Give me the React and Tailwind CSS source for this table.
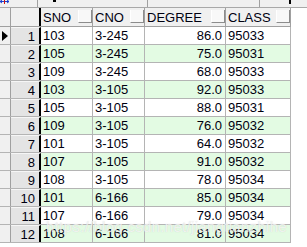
import React from "react";

const rows = [
  ["103", "3-245", "86.0", "95033"],
  ["105", "3-245", "75.0", "95031"],
  ["109", "3-245", "68.0", "95033"],
  ["103", "3-105", "92.0", "95033"],
  ["105", "3-105", "88.0", "95031"],
  ["109", "3-105", "76.0", "95032"],
  ["101", "3-105", "64.0", "95032"],
  ["107", "3-105", "91.0", "95032"],
  ["108", "3-105", "78.0", "95034"],
  ["101", "6-166", "85.0", "95034"],
  ["107", "6-166", "79.0", "95034"],
  ["108", "6-166", "81.0", "95034"],
];

function HeaderCell({ label, w }) {
  return (
    <div className={`${w} h-full flex items-center justify-between border-r border-[#a0a0a0] bg-[#f0f0f0]`}>
      <span className="pl-[2px]">{label}</span>
      <div className="w-[14px] h-[13px] self-start mt-[2px] bg-[#f8f8f8] border-r border-b border-[#8c8c8c] border-l border-l-[#ffffff]" />
    </div>
  );
}

export default function App() {
  return (
    <div
      className="relative w-[307px] h-[247px] bg-white overflow-hidden text-[13px] leading-none text-[#000010]"
      style={{ fontFamily: '"Liberation Sans", Arial, sans-serif' }}
    >
      {/* toolbar remnant */}
      <div className="flex h-[8px] bg-[#f0f0f0] border-b border-[#a8a8a8]">
        <div className="w-[38px] border-r border-[#a0a0a0] flex items-start">
          <svg width="9" height="4" viewBox="0 0 9 4" className="ml-[0px]">
            <line x1="0" y1="1.5" x2="9" y2="1.5" stroke="#1a3fd0" strokeWidth="1" />
            <path d="M0 1.5 L2 0 M0 1.5 L2 3 M9 1.5 L7 0 M9 1.5 L7 3" stroke="#1a3fd0" strokeWidth="1" fill="none" />
            <line x1="4.5" y1="0" x2="4.5" y2="4" stroke="#d01010" strokeWidth="1" />
          </svg>
        </div>
        <div className="w-[110px] border-r border-[#a0a0a0] pl-[15px]">
          <div className="w-[3px] h-[2px] bg-black" />
        </div>
        <div className="w-[112px] border-r border-[#a0a0a0]" />
        <div className="flex-1 pl-[29px]">
          <div className="w-[2px] h-[4px] bg-black" />
        </div>
      </div>

      {/* header */}
      <div className="flex h-[19px] border-b border-[#a0a0a0] w-[291px]">
        <div className="w-[11px] h-full bg-[#f0f0f0] border-r border-[#a0a0a0]" />
        <div className="w-[30px] h-full bg-[#f0f0f0] border-r-2 border-black" />
        <HeaderCell label="SNO" w="w-[52px]" />
        <HeaderCell label="CNO" w="w-[52px]" />
        <HeaderCell label="DEGREE" w="w-[81px]" />
        <HeaderCell label="CLASS" w="w-[65px]" />
      </div>

      {/* rows */}
      <div className="flex flex-col w-[291px]">
        {rows.map((r, i) => {
          const bg = i % 2 === 1 ? "bg-[#e3fbe3]" : "bg-white";
          return (
            <div key={i} className="flex h-[18px] border-b border-[#b4b4b4]">
              <div className="w-[11px] h-full bg-[#f0f0f0] border-r border-[#a0a0a0] flex items-center pl-[2px]">
                {i === 0 && (
                  <svg width="6" height="10" viewBox="0 0 6 10">
                    <path d="M0 0 L6 5 L0 10 Z" fill="#000" />
                  </svg>
                )}
              </div>
              <div className="w-[30px] h-full bg-[#e4e4e4] border-t border-[#f6f6f6] border-r-2 border-r-black flex items-center justify-end pr-[4px]">
                {i + 1}
              </div>
              <div className={`w-[52px] h-full ${bg} border-r border-[#b4b4b4] flex items-center pl-[2px]`}>{r[0]}</div>
              <div className={`w-[52px] h-full ${bg} border-r border-[#b4b4b4] flex items-center pl-[2px]`}>{r[1]}</div>
              <div className={`w-[81px] h-full ${bg} border-r border-[#b4b4b4] flex items-center justify-end pr-[3px]`}>{r[2]}</div>
              <div className={`w-[65px] h-full ${bg} border-r border-[#b4b4b4] flex items-center pl-[2px]`}>{r[3]}</div>
            </div>
          );
        })}
      </div>

      {/* watermark */}
      <div
        className="absolute left-[46px] top-[219px] text-[15px] leading-none text-white/70 whitespace-nowrap tracking-[0.3px]"
        style={{ textShadow: "0 0 1px rgba(180,180,180,0.6)" }}
      >
        https://blog.csdn.net/jiangtianzhihe
      </div>
    </div>
  );
}
